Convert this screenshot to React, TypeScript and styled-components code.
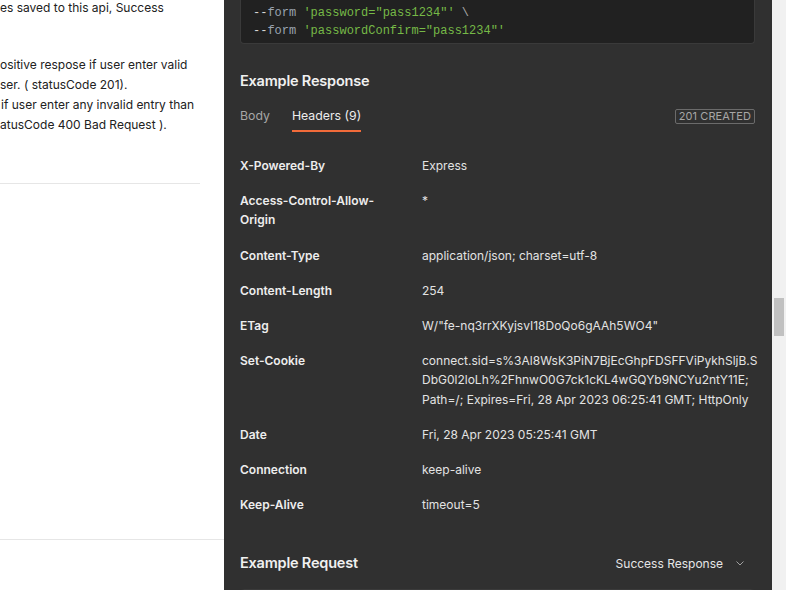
import React from "react";
import styled, { createGlobalStyle } from "styled-components";

const Global = createGlobalStyle`
  html, body { margin: 0; padding: 0; overflow: hidden; background: #ffffff; }
  body { font-family: Inter, "Noto Sans", "Liberation Sans", sans-serif; }
  * { box-sizing: border-box; }
`;

const Page = styled.div`
  display: flex;
  width: 786px;
  height: 590px;
  overflow: hidden;
`;

const LeftPanel = styled.div`
  width: 224px;
  flex: none;
  background: #ffffff;
  display: flex;
  flex-direction: column;
  overflow: hidden;
  color: #212121;
  font-size: 12px;
`;

const TextBlock = styled.div<{ $top: number }>`
  margin-top: ${(p) => p.$top}px;
  padding-right: 24px;
`;

const Line = styled.div<{ $shift?: number }>`
  line-height: 20px;
  height: 20px;
  white-space: nowrap;
  margin-left: ${(p) => p.$shift ?? 0}px;
`;

const Divider = styled.div<{ $top: number; $inset: number }>`
  margin-top: ${(p) => p.$top}px;
  margin-right: ${(p) => p.$inset}px;
  height: 1px;
  background: #e6e6e6;
  flex: none;
`;

const DarkPanel = styled.div`
  width: 548px;
  flex: none;
  background: #303030;
  padding: 0 17px 0 16px;
  display: flex;
  flex-direction: column;
  overflow: hidden;
`;

const CodeBlock = styled.div<{ $open?: boolean; $top?: number }>`
  margin-top: ${(p) => p.$top ?? 0}px;
  background: #212121;
  border: 1px solid #3a3a3a;
  border-top: ${(p) => (p.$open ? "none" : "1px solid #3a3a3a")};
  border-radius: ${(p) => (p.$open ? "0 0 4px 4px" : "4px 4px 0 0")};
  padding: ${(p) => (p.$open ? "4px 12px 3px" : "8px 12px")};
  font-family: "Liberation Mono", "DejaVu Sans Mono", monospace;
  font-size: 12px;
  line-height: 18px;
  flex: none;
`;

const CodeLine = styled.div`
  white-space: pre;
`;

const Tok = styled.span<{ $kind: "dash" | "kw" | "str" | "plain" }>`
  color: ${(p) =>
    p.$kind === "dash"
      ? "#d6d6d6"
      : p.$kind === "kw"
      ? "#9aa4b0"
      : p.$kind === "str"
      ? "#76b947"
      : "#a8a8a8"};
`;

const SectionHeader = styled.div<{ $top: number }>`
  margin-top: ${(p) => p.$top}px;
  display: flex;
  align-items: center;
  justify-content: space-between;
  height: 24px;
  flex: none;
`;

const Heading = styled.h2`
  margin: 0;
  font-size: 14.5px;
  font-weight: 600;
  color: #f0f0f0;
  line-height: 24px;
  letter-spacing: -0.2px;
`;

const Dropdown = styled.div`
  display: flex;
  align-items: center;
  gap: 12px;
  padding-right: 10px;
  font-size: 12px;
  color: #e6e6e6;
`;

const TabsRow = styled.div`
  margin-top: 13px;
  display: flex;
  align-items: center;
  justify-content: space-between;
  flex: none;
`;

const Tabs = styled.div`
  display: flex;
  gap: 22px;
`;

const Tab = styled.div<{ $active?: boolean }>`
  font-size: 12.3px;
  line-height: 20px;
  padding-bottom: 4px;
  color: ${(p) => (p.$active ? "#ededed" : "#a6a6a6")};
  border-bottom: 2px solid ${(p) => (p.$active ? "#f26b3a" : "transparent")};
`;

const Badge = styled.div`
  font-size: 11px;
  line-height: 13px;
  padding: 0 3px;
  color: #a6a6a6;
  border: 1px solid #6b6b6b;
  border-radius: 2px;
  margin-bottom: 6px;
  letter-spacing: 0.1px;
`;

const HeaderTable = styled.div`
  margin-top: 16px;
  display: grid;
  grid-template-columns: 182px 1fr;
  font-size: 12px;
  line-height: 19.2px;
  flex: none;
`;

const Key = styled.div`
  padding: 8px 16px 8px 0;
  font-weight: 600;
  color: #ededed;
`;

const Value = styled.div`
  padding: 8px 0;
  margin-right: -6px;
  color: #e3e3e3;
  overflow-wrap: anywhere;
`;

const Scrollbar = styled.div`
  width: 14px;
  flex: none;
  background: #f1f1f1;
  padding: 298px 2px 0 2px;
`;

const Thumb = styled.div`
  height: 38px;
  background: #c1c1c1;
`;

const headers: [string, string][] = [
  ["X-Powered-By", "Express"],
  ["Access-Control-Allow-Origin", "*"],
  ["Content-Type", "application/json; charset=utf-8"],
  ["Content-Length", "254"],
  ["ETag", 'W/"fe-nq3rrXKyjsvI18DoQo6gAAh5WO4"'],
  [
    "Set-Cookie",
    "connect.sid=s%3Al8WsK3PiN7BjEcGhpFDSFFViPykhSljB.SDbG0l2loLh%2FhnwO0G7ck1cKL4wGQYb9NCYu2ntY11E; Path=/; Expires=Fri, 28 Apr 2023 06:25:41 GMT; HttpOnly",
  ],
  ["Date", "Fri, 28 Apr 2023 05:25:41 GMT"],
  ["Connection", "keep-alive"],
  ["Keep-Alive", "timeout=5"],
];

const Chevron = () => (
  <svg width="10" height="10" viewBox="0 0 10 10" fill="none">
    <path d="M1.5 3.5 L5 7 L8.5 3.5" stroke="#a0a0a0" strokeWidth="1" />
  </svg>
);

export default function App() {
  return (
    <Page>
      <Global />
      <LeftPanel>
        <TextBlock $top={-2}>
          <Line>es saved to this api, Success</Line>
        </TextBlock>
        <TextBlock $top={37}>
          <Line>ositive respose if user enter valid</Line>
          <Line>ser. ( statusCode 201).</Line>
          <Line $shift={1}>if user enter any invalid entry than</Line>
          <Line>atusCode 400 Bad Request ).</Line>
        </TextBlock>
        <Divider $top={48} $inset={24} />
        <Divider $top={355} $inset={0} />
      </LeftPanel>
      <DarkPanel>
        <CodeBlock $open>
          <CodeLine>
            <Tok $kind="dash">--</Tok>
            <Tok $kind="kw">form</Tok> <Tok $kind="str">'password="pass1234"'</Tok>{" "}
            <Tok $kind="plain">\</Tok>
          </CodeLine>
          <CodeLine>
            <Tok $kind="dash">--</Tok>
            <Tok $kind="kw">form</Tok> <Tok $kind="str">'passwordConfirm="pass1234"'</Tok>
          </CodeLine>
        </CodeBlock>
        <SectionHeader $top={25}>
          <Heading>Example Response</Heading>
        </SectionHeader>
        <TabsRow>
          <Tabs>
            <Tab>Body</Tab>
            <Tab $active>Headers (9)</Tab>
          </Tabs>
          <Badge>201 CREATED</Badge>
        </TabsRow>
        <HeaderTable>
          {headers.map(([k, v]) => (
            <React.Fragment key={k}>
              <Key>{k}</Key>
              <Value>{v}</Value>
            </React.Fragment>
          ))}
        </HeaderTable>
        <SectionHeader $top={29}>
          <Heading>Example Request</Heading>
          <Dropdown>
            Success Response
            <Chevron />
          </Dropdown>
        </SectionHeader>
        <CodeBlock $top={14}>
          <CodeLine> </CodeLine>
        </CodeBlock>
      </DarkPanel>
      <Scrollbar>
        <Thumb />
      </Scrollbar>
    </Page>
  );
}
